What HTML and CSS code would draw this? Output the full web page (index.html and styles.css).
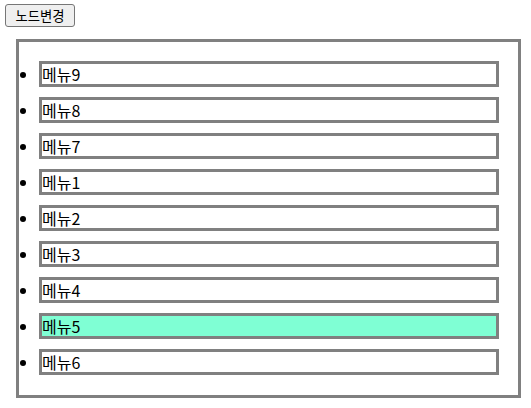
FILE: index.html
```html
<!DOCTYPE html>
<html lang="ko">
<head>
<meta charset="utf-8">
<link rel="stylesheet" href="styles.css">
</head>
<body>
<button class="change-btn" type="button">노드변경</button>
<div class="panel">
  <ul class="menu-list">
    <li class="menu-item"><div class="menu-box">메뉴9</div></li>
    <li class="menu-item"><div class="menu-box">메뉴8</div></li>
    <li class="menu-item"><div class="menu-box">메뉴7</div></li>
    <li class="menu-item"><div class="menu-box">메뉴1</div></li>
    <li class="menu-item"><div class="menu-box">메뉴2</div></li>
    <li class="menu-item"><div class="menu-box">메뉴3</div></li>
    <li class="menu-item"><div class="menu-box">메뉴4</div></li>
    <li class="menu-item"><div class="menu-box menu-box--active">메뉴5</div></li>
    <li class="menu-item"><div class="menu-box">메뉴6</div></li>
  </ul>
</div>
</body>
</html>
```
FILE: styles.css
```css
html, body {
  background: #ffffff;
}
body {
  margin: 4px 5px;
  font-family: "Noto Sans CJK KR", "Noto Sans", sans-serif;
  color: #000;
}
.change-btn {
  display: block;
  box-sizing: border-box;
  width: 70px;
  height: 23px;
  padding: 0 6px;
  margin: 0;
  font-family: "Noto Sans CJK KR", sans-serif;
  font-size: 13.33px;
  line-height: 19px;
  color: #000;
  background: #efefef;
  border: 1px solid #767676;
  border-radius: 3px;
}
.panel {
  margin: 12px 5px 0 11px;
  border: 3px solid #808080;
}
.menu-list {
  margin: 0;
  padding: 19px 19px 20px 20px;
  list-style: disc outside;
}
.menu-item {
  margin-bottom: 10px;
  font-size: 16px;
  line-height: 20px;
}
.menu-item:last-child {
  margin-bottom: 0;
}
.menu-box {
  border: 3px solid #808080;
  height: 20px;
  line-height: 20px;
  font-size: 16px;
  padding: 0;
}
.menu-box--active {
  background: #7fffd4;
}
```
